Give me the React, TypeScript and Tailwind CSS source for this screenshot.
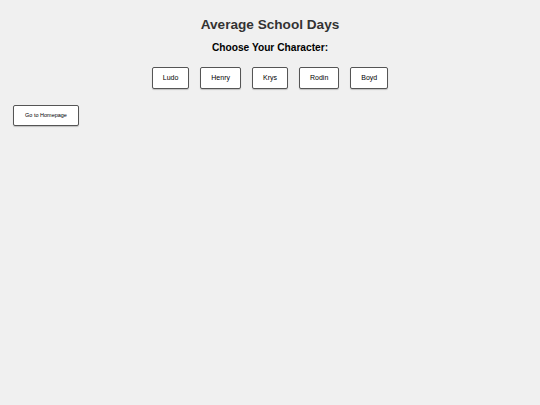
const characters = ['Ludo', 'Henry', 'Krys', 'Rodin', 'Boyd'];

export default function App() {
  return (
    <div className="min-h-[405px] bg-[#f0f0f0] font-['Liberation_Sans',Arial,sans-serif]">
      <div className="flex flex-col items-center pt-[15px]">
        <h1 className="text-[13.6px] leading-[20px] font-bold text-[#333]">Average School Days</h1>
        <h2 className="mt-[6px] text-[10.2px] leading-[14px] font-bold text-black">Choose Your Character:</h2>
        <div className="mt-[12px] flex gap-[11px]">
          {characters.map((c) => (
            <button
              key={c}
              className="h-[22px] px-[10px] bg-white border border-[#555] rounded-[2px] shadow-[0_1px_1px_rgba(0,0,0,0.2)] text-[7px] text-black"
            >
              {c}
            </button>
          ))}
        </div>
      </div>
      <div className="px-[13px] mt-[11px]">
        <button className="h-[21px] w-[66px] bg-white border border-[#555] rounded-[2px] shadow-[0_1px_1px_rgba(0,0,0,0.2)] text-[5.5px] text-black">
          Go to Homepage
        </button>
      </div>
    </div>
  );
}
